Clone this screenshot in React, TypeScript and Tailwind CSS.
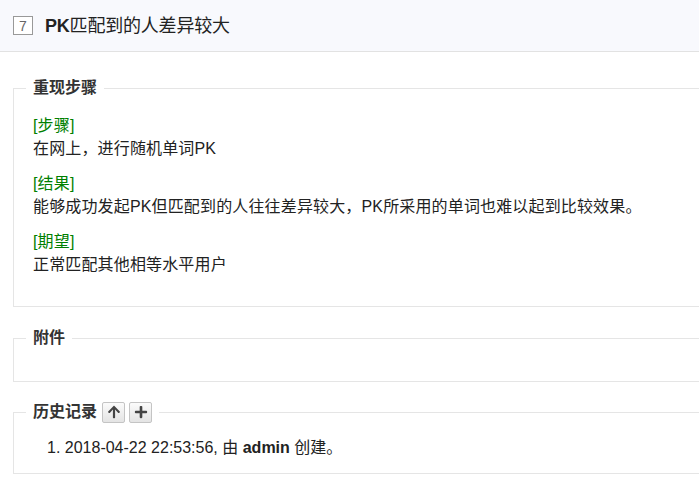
import React from "react";
import { FaArrowUp, FaPlus } from "react-icons/fa";

const font = "font-['Liberation_Sans','Noto_Sans_CJK_SC',sans-serif]";

interface Step {
  label: string;
  text: React.ReactNode;
}

const steps: Step[] = [
  { label: "[步骤]", text: "在网上，进行随机单词PK" },
  {
    label: "[结果]",
    text: "能够成功发起PK但匹配到的人往往差异较大，PK所采用的单词也难以起到比较效果。",
  },
  { label: "[期望]", text: "正常匹配其他相等水平用户" },
];

const Legend: React.FC<{ children: React.ReactNode }> = ({ children }) => (
  <legend className="-ml-[7px] flex h-[24px] items-center px-[7px] text-[16px] font-semibold leading-[24px] text-[#333]">
    {children}
  </legend>
);

const IconButton: React.FC<{ children: React.ReactNode; className?: string }> = ({
  children,
  className = "",
}) => (
  <button
    className={`flex h-[21px] w-[23px] shrink-0 items-center justify-center rounded-[2px] border border-[#c4c4c4] bg-gradient-to-b from-[#fbfbfb] to-[#e4e4e4] text-[#444] ${className}`}
  >
    {children}
  </button>
);

const App: React.FC = () => {
  return (
    <div className={`min-h-[486px] w-full overflow-hidden bg-white text-[#222] ${font}`}>
      <div className="flex h-[52px] items-center border-b border-[#e2e2e2] bg-[#f8f9fd] pl-[13px]">
        <span className="flex h-[19px] w-[20px] items-center justify-center border border-[#999] bg-white text-[14px] leading-none text-[#666]">
          7
        </span>
        <h1 className="ml-[12px] text-[18px] leading-none tracking-[-0.2px] text-[#222]">
          <span className="font-bold">PK</span>匹配到的人差异较大
        </h1>
      </div>

      <div className="ml-[13px] flex w-[720px] flex-col">
        <fieldset className="mt-[24px] border border-[#e5e5e5] pb-[30px] pl-[19px]">
          <Legend>重现步骤</Legend>
          <div className="mt-[14px] flex flex-col gap-[12px] text-[16px] leading-[23px] tracking-[0.15px]">
            {steps.map((s) => (
              <div key={s.label}>
                <div className="text-[#008000]">{s.label}</div>
                <div>{s.text}</div>
              </div>
            ))}
          </div>
        </fieldset>

        <fieldset className="mt-[19px] h-[56px] border border-[#e5e5e5] pl-[19px]">
          <Legend>附件</Legend>
        </fieldset>

        <fieldset className="mt-[18px] border border-[#e5e5e5] pb-[14px] pl-[19px]">
          <Legend>
            历史记录
            <IconButton className="ml-[5px]">
              <FaArrowUp size={14} />
            </IconButton>
            <IconButton className="ml-[4px]">
              <FaPlus size={14} />
            </IconButton>
          </Legend>
          <ol className="mt-[12px] pl-[14px] text-[16px] leading-[23px]">
            <li>
              1. 2018-04-22 22:53:56, 由 <strong className="font-bold">admin</strong> 创建。
            </li>
          </ol>
        </fieldset>
      </div>
    </div>
  );
};

export default App;
